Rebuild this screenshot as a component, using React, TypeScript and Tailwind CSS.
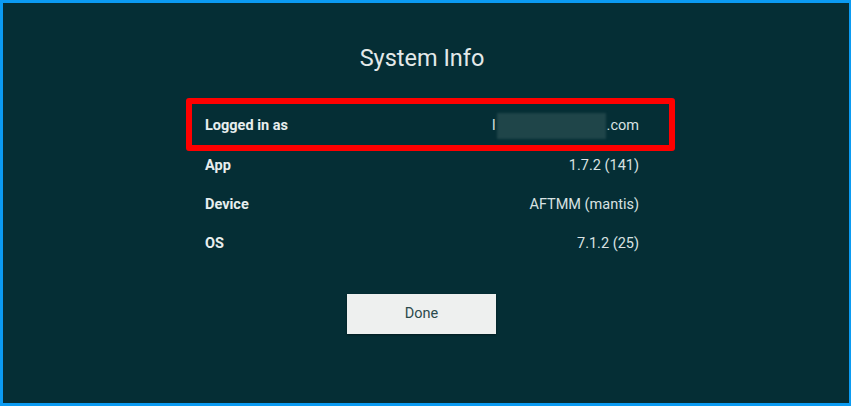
import React from 'react';

const rows = [
  { label: 'App', value: '1.7.2 (141)' },
  { label: 'Device', value: 'AFTMM (mantis)' },
  { label: 'OS', value: '7.1.2 (25)' },
];

export default function App() {
  return (
    <div
      className="w-[851px] h-[406px] overflow-hidden bg-[#052e35] border-[3px] border-r-2 border-[#0b9bf2] flex flex-col"
      style={{ fontFamily: 'Roboto, "Liberation Sans", sans-serif' }}
    >
      {/* Title */}
      <h1 className="mt-[41px] ml-[-8px] text-center text-[23.5px] leading-[28px] text-[#e3e9e9]">
        System Info
      </h1>

      {/* Info list */}
      <div className="relative mt-[34px] ml-[202px] w-[434px]">
        <div className="flex h-[40px] items-center justify-between">
          <span className="text-[14.5px] font-bold text-[#e8eeee]">Logged in as</span>
          <span className="flex items-center text-[14.5px] text-[#d9e2e2]">
            l
            <span className="mx-[1px] inline-block h-[26px] w-[109px] bg-[#1f4549] blur-[1px]" />
            .com
          </span>
        </div>
        {rows.map((r) => (
          <div key={r.label} className="flex h-[39px] items-center justify-between">
            <span className="text-[14.5px] font-bold text-[#e8eeee]">{r.label}</span>
            <span className="text-[14.5px] text-[#d9e2e2]">{r.value}</span>
          </div>
        ))}

        {/* Annotation highlight */}
        <div className="pointer-events-none absolute left-[-19px] top-[-8px] h-[53px] w-[489px] rounded-[3px] border-[6px] border-[#ff0000]" />
      </div>

      {/* Done button */}
      <div className="mt-[31px] ml-[344px]">
        <button className="h-[40px] w-[149px] bg-[#eef0ef] text-[14.5px] text-[#2b4a4b] shadow-[0_1px_2px_rgba(0,0,0,0.4)]">
          Done
        </button>
      </div>
    </div>
  );
}
